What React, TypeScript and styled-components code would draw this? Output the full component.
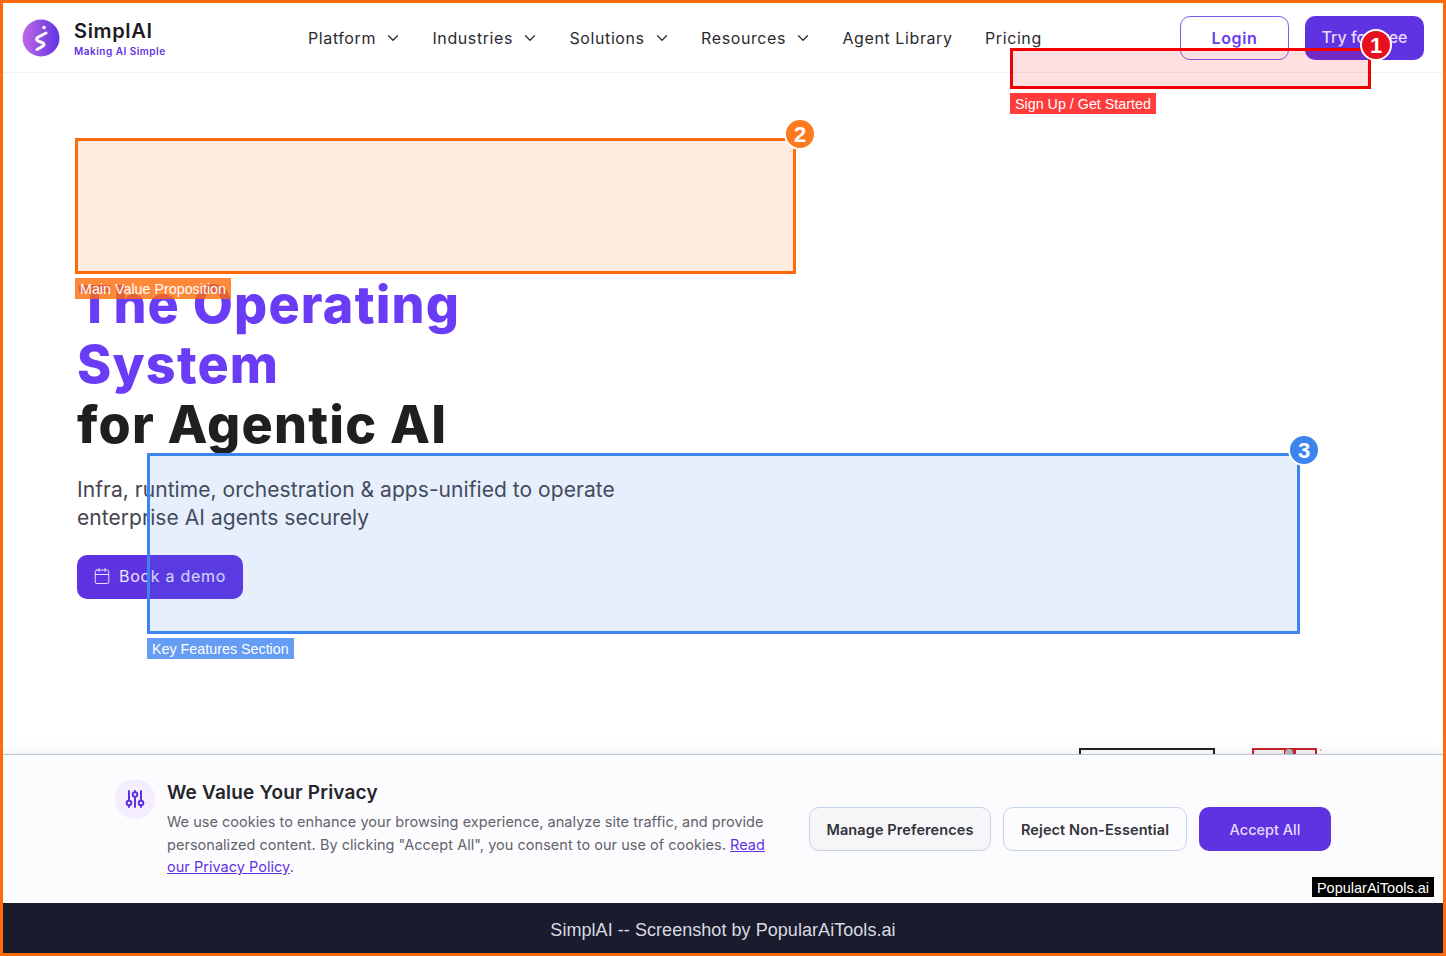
import React from "react";
import styled, { createGlobalStyle } from "styled-components";
import { Calendar, ChevronDown } from "lucide-react";

const SANS = `Inter, "Open Sans", "Liberation Sans", sans-serif`;
const LABEL = `"Liberation Sans", Arial, sans-serif`;
const PURPLE = "#5f33e1";
const HERO_PURPLE = "#6a3cf5";

const Global = createGlobalStyle`
  html, body { margin: 0; padding: 0; background: #fff; }
  * { box-sizing: border-box; }
`;

const Frame = styled.div`
  position: relative;
  width: 1446px;
  height: 956px;
  border: 3px solid #ff6b0a;
  display: flex;
  flex-direction: column;
  overflow: hidden;
  background: #fff;
  font-family: ${SANS};
`;

const Viewport = styled.div`
  position: relative;
  flex: 1;
  display: flex;
  flex-direction: column;
  overflow: hidden;
`;

const Header = styled.header`
  height: 70px;
  flex: none;
  display: flex;
  align-items: center;
  padding: 0 19px;
  border-bottom: 1px solid #f1f0fd;
`;

const Brand = styled.div`
  display: flex;
  align-items: center;
  gap: 14px;
  width: 286px;
  flex: none;
`;

const BrandText = styled.div`
  display: flex;
  flex-direction: column;
  gap: 2px;
  padding-top: 2px;
`;

const BrandName = styled.span`
  font-size: 20px;
  line-height: 24px;
  font-weight: 600;
  color: #1c1c1f;
  letter-spacing: 0.65px;
`;

const BrandTag = styled.span`
  font-size: 10px;
  line-height: 13px;
  font-weight: 600;
  color: ${PURPLE};
  letter-spacing: 0.5px;
`;

const Nav = styled.nav`
  display: flex;
  align-items: center;
  gap: 32.4px;
  flex: 1;
  padding-top: 1px;
`;

const NavItem = styled.a`
  display: flex;
  align-items: center;
  gap: 8px;
  font-size: 16px;
  line-height: 20px;
  color: #2b2b2f;
  letter-spacing: 0.6px;
`;

const Chevron = styled(ChevronDown)`
  margin-right: -2px;
`;

const Actions = styled.div`
  display: flex;
  gap: 16px;
`;

const LoginButton = styled.button`
  width: 109px;
  height: 44px;
  border: 1px solid #7c5cf0;
  border-radius: 10px;
  background: #fff;
  color: #6a3cf0;
  font: 600 16px ${SANS};
  letter-spacing: 0.65px;
  padding: 1px 0 0 0;
`;

const TryButton = styled.button`
  width: 119px;
  height: 44px;
  border: none;
  border-radius: 10px;
  background: ${PURPLE};
  color: #e4dcff;
  font: 500 16px ${SANS};
  letter-spacing: 0;
  padding: 0 0 2px;
`;

const Hero = styled.section`
  padding: 202px 74px 0;
  display: flex;
  flex-direction: column;
  align-items: flex-start;
`;

const Title = styled.h1`
  margin: 0;
  font-size: 52px;
  line-height: 60px;
  font-weight: 800;
  color: #1f1f22;
  letter-spacing: 1.2px;
`;

const TitleAccent = styled.span`
  display: block;
  color: ${HERO_PURPLE};
`;

const Sub = styled.p`
  margin: 21px 0 0;
  width: 600px;
  font-size: 21px;
  line-height: 28px;
  font-weight: 400;
  color: #45454d;
  letter-spacing: 0.05px;
`;

const DemoButton = styled.button`
  margin-top: 23px;
  width: 166px;
  height: 44px;
  border: none;
  border-radius: 10px;
  background: ${PURPLE};
  color: #e9e3ff;
  font: 400 16px ${SANS};
  letter-spacing: 0.72px;
  display: flex;
  align-items: center;
  gap: 8px;
  padding: 0 0 2px 16px;
`;

const DarkLogoPeek = styled.div`
  position: absolute;
  left: 1076px;
  top: 745px;
  width: 136px;
  height: 20px;
  border: 2px solid #222;
`;

const RedLogoPeek = styled.svg`
  position: absolute;
  left: 1249px;
  top: 745px;
`;

const CookieBanner = styled.div`
  position: absolute;
  left: 0;
  right: 0;
  bottom: 0;
  height: 149px;
  background: #fcfcff;
  border-top: 1px solid #b5c5e0;
  box-shadow: 0 -4px 10px rgba(0, 0, 0, 0.06);
  display: flex;
  align-items: flex-start;
  padding: 24px 0 0 112px;
`;

const CookieIcon = styled.div`
  width: 40px;
  height: 40px;
  flex: none;
  border-radius: 50%;
  background: #f3edfd;
  color: ${PURPLE};
  display: flex;
  align-items: center;
  justify-content: center;
`;

const CookieBody = styled.div`
  width: 612px;
  margin-left: 12px;
  padding-top: 1px;
  flex: none;
`;

const CookieTitle = styled.h2`
  margin: 0;
  font-size: 19px;
  line-height: 26px;
  font-weight: 600;
  color: #25252a;
  letter-spacing: 0.2px;
`;

const CookieText = styled.p`
  margin: 5px 0 0;
  font-size: 14.5px;
  line-height: 22.5px;
  color: #62626a;
  letter-spacing: 0.03px;
`;

const CookieLink = styled.a`
  color: ${PURPLE};
  text-decoration: underline;
`;

const CookieActions = styled.div`
  display: flex;
  gap: 12px;
  margin: 28px 0 0 30px;
`;

const GhostButton = styled.button<{ $w: number; $bg: string }>`
  width: ${(p) => p.$w}px;
  height: 44px;
  border: 1px solid #c3d3e8;
  border-radius: 10px;
  background: ${(p) => p.$bg};
  color: #33333a;
  font: 600 14.5px ${SANS};
  letter-spacing: 0.1px;
  padding: 0;
`;

const AcceptButton = styled.button`
  width: 132px;
  height: 44px;
  border: none;
  border-radius: 10px;
  background: ${PURPLE};
  color: #e4dcff;
  font: 500 14.5px ${SANS};
  padding: 0;
`;

const Watermark = styled.div`
  position: absolute;
  right: 9px;
  bottom: 6px;
  height: 20px;
  padding: 1px 5px 0;
  background: #000;
  color: #fff;
  font: 14.5px/20px ${LABEL};
  white-space: nowrap;
`;

const BottomBar = styled.footer`
  height: 50px;
  flex: none;
  padding-top: 2px;
  background: #1a1c2e;
  color: #d9dae0;
  font: 18px/50px ${LABEL};
  letter-spacing: 0.05px;
  text-align: center;
`;

const Box = styled.div<{ $x: number; $y: number; $w: number; $h: number; $line: string; $fill: string }>`
  position: absolute;
  left: ${(p) => p.$x}px;
  top: ${(p) => p.$y}px;
  width: ${(p) => p.$w}px;
  height: ${(p) => p.$h}px;
  border: 3px solid ${(p) => p.$line};
  background: ${(p) => p.$fill};
`;

const Tag = styled.div<{ $x: number; $y: number; $bg: string }>`
  position: absolute;
  left: ${(p) => p.$x}px;
  top: ${(p) => p.$y}px;
  height: 21px;
  padding: 1px 5px 0;
  background: ${(p) => p.$bg};
  color: #fff;
  font: 14.3px/20px ${LABEL};
  white-space: nowrap;
`;

const Badge = styled.div<{ $x: number; $y: number; $bg: string }>`
  position: absolute;
  left: ${(p) => p.$x}px;
  top: ${(p) => p.$y}px;
  width: 32px;
  height: 32px;
  border-radius: 50%;
  border: 2px solid #fff;
  background: ${(p) => p.$bg};
  color: #fff;
  font: 700 22px/29px ${LABEL};
  text-align: center;
`;

const Logo = () => (
  <svg width="38" height="38" viewBox="0 0 38 38" aria-hidden="true">
    <defs>
      <linearGradient id="brandGrad" x1="0" y1="0" x2="1" y2="0">
        <stop offset="0" stopColor="#c069e6" />
        <stop offset="1" stopColor="#5f33e1" />
      </linearGradient>
    </defs>
    <circle cx="19" cy="19" r="18.5" fill="url(#brandGrad)" />
    <circle cx="22" cy="8.5" r="1.8" fill="#fff" />
    <path
      d="M24 14 L15.5 18.5 Q13.5 20.5 16 22 L21 24 Q23 25.5 21 27 L15 30.5"
      fill="none"
      stroke="#fff"
      strokeWidth="3"
      strokeLinecap="round"
      strokeLinejoin="round"
    />
  </svg>
);

const SlidersIcon = () => (
  <svg width="20" height="20" viewBox="0 0 20 20" fill="none" stroke="currentColor" strokeWidth="2" strokeLinecap="round" aria-hidden="true">
    <path d="M4 2 V11.5 M4 16.5 V18" />
    <circle cx="4" cy="14" r="2.3" />
    <path d="M10 2 V3 M10 8 V18" />
    <circle cx="10" cy="5.5" r="2.3" />
    <path d="M16 2 V11.5 M16 16.5 V18" />
    <circle cx="16" cy="14" r="2.3" />
  </svg>
);

const navItems = [
  { label: "Platform", menu: true },
  { label: "Industries", menu: true },
  { label: "Solutions", menu: true },
  { label: "Resources", menu: true },
  { label: "Agent Library", menu: false },
  { label: "Pricing", menu: false },
];

export default function App() {
  return (
    <Frame>
      <Global />
      <Viewport>
        <Header>
          <Brand>
            <Logo />
            <BrandText>
              <BrandName>SimplAI</BrandName>
              <BrandTag>Making AI Simple</BrandTag>
            </BrandText>
          </Brand>
          <Nav>
            {navItems.map((n) => (
              <NavItem key={n.label}>
                {n.label}
                {n.menu && <Chevron size={18} strokeWidth={1.6} />}
              </NavItem>
            ))}
          </Nav>
          <Actions>
            <LoginButton>Login</LoginButton>
            <TryButton>Try for free</TryButton>
          </Actions>
        </Header>
        <Hero>
          <Title>
            <TitleAccent>The Operating</TitleAccent>
            <TitleAccent>System</TitleAccent>
            for Agentic AI
          </Title>
          <Sub>
            Infra, runtime, orchestration &amp; apps-unified to operate enterprise AI agents securely
          </Sub>
          <DemoButton>
            <Calendar size={18} strokeWidth={1.3} />
            Book a demo
          </DemoButton>
        </Hero>
        <DarkLogoPeek />
        <RedLogoPeek width="72" height="10" viewBox="0 0 72 10" aria-hidden="true">
          <rect x="0" y="0" width="65" height="10" fill="#c8202c" />
          <rect x="2" y="2" width="30" height="8" fill="#f6f2f2" />
          <rect x="44" y="2" width="19" height="8" fill="#f6f2f2" />
          <circle cx="37" cy="5" r="4" fill="#b9b9bd" />
          <rect x="68" y="1" width="2" height="2" fill="#c9c9cc" />
        </RedLogoPeek>
        <CookieBanner>
          <CookieIcon>
            <SlidersIcon />
          </CookieIcon>
          <CookieBody>
            <CookieTitle>We Value Your Privacy</CookieTitle>
            <CookieText>
              We use cookies to enhance your browsing experience, analyze site traffic, and provide
              personalized content. By clicking "Accept All", you consent to our use of cookies.{" "}
              <CookieLink>Read our Privacy Policy</CookieLink>.
            </CookieText>
          </CookieBody>
          <CookieActions>
            <GhostButton $w={182} $bg="#f6f6f8">Manage Preferences</GhostButton>
            <GhostButton $w={184} $bg="#fcfcff">Reject Non-Essential</GhostButton>
            <AcceptButton>Accept All</AcceptButton>
          </CookieActions>
          <Watermark>PopularAiTools.ai</Watermark>
        </CookieBanner>
      </Viewport>
      <BottomBar>SimplAI -- Screenshot by PopularAiTools.ai</BottomBar>

      <Box $x={1007} $y={45} $w={361} $h={41} $line="#f00000" $fill="rgba(255,0,0,0.12)" />
      <Tag $x={1007} $y={90} $bg="#ff3b3b">Sign Up / Get Started</Tag>
      <Badge $x={1357} $y={26} $bg="#e8101c">1</Badge>

      <Box $x={72} $y={135} $w={721} $h={136} $line="#ff6b0a" $fill="rgba(255,107,10,0.13)" />
      <Tag $x={72} $y={275} $bg="rgba(255,107,10,0.8)">Main Value Proposition</Tag>
      <Badge $x={781} $y={115} $bg="#ff7a1e">2</Badge>

      <Box $x={144} $y={450} $w={1153} $h={181} $line="#3d84ee" $fill="rgba(61,120,230,0.12)" />
      <Tag $x={144} $y={635} $bg="#659cf4">Key Features Section</Tag>
      <Badge $x={1285} $y={431} $bg="#3d84ee">3</Badge>
    </Frame>
  );
}
